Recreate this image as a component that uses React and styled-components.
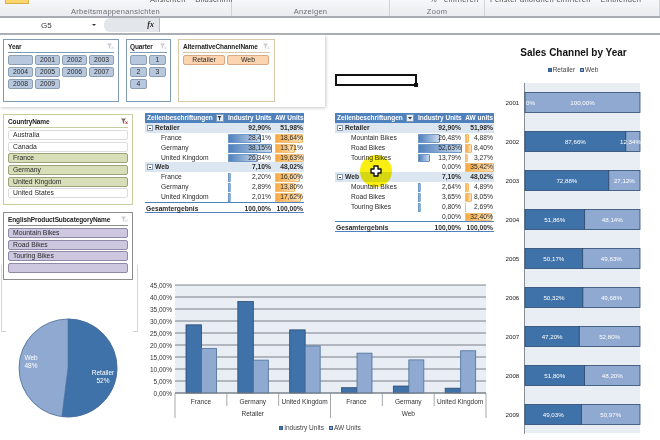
import styled, { createGlobalStyle } from "styled-components";

const Global = createGlobalStyle`
  html, body {
    margin: 0;
    padding: 0;
    background: #ffffff;
  }
  body {
    font-family: "Liberation Sans", Arial, sans-serif;
    color: #222;
  }
`;

const Page = styled.div`
  width: 660px;
  height: 440px;
  overflow: hidden;
  background: #ffffff;
  filter: blur(0.35px);
`;

const Ribbon = styled.div`
  height: 16px;
  display: flex;
  background: linear-gradient(#f6f7f9, #e9ecf0);
  border-bottom: 2px solid #a9adb3;
  overflow: hidden;
`;
const RibbonGroup = styled.div`
  width: ${(p) => p.$w}px;
  flex: none;
  position: relative;
  border-right: 1px solid #d0d3d8;
  box-sizing: border-box;
  text-align: center;
  font-size: 7.5px;
  letter-spacing: 0.3px;
  color: #6b6f76;
  padding-top: 7px;
`;
const RibbonCut = styled.span`
  position: absolute;
  top: -5px;
  left: ${(p) => p.$x}px;
  color: #555;
  white-space: nowrap;
  font-size: 7.5px;
`;
const YellowBtn = styled.span`
  position: absolute;
  top: 0;
  left: 5px;
  width: 24px;
  height: 4px;
  background: #fbd66f;
  border: 1px solid #d9b04a;
  border-top: 0;
  box-sizing: border-box;
`;

const FormulaBar = styled.div`
  height: 14px;
  display: flex;
  align-items: center;
  background: #ffffff;
  border-bottom: 2px solid #a9adb3;
  padding-bottom: 1px;
`;
const NameBox = styled.div`
  width: 100px;
  flex: none;
  display: flex;
  align-items: center;
  font-size: 8px;
  padding-left: 41px;
  box-sizing: border-box;
  gap: 40px;
  color: #333;
`;
const Arrow = styled.span`
  width: 0;
  height: 0;
  border-left: 2px solid transparent;
  border-right: 2px solid transparent;
  border-top: 2px solid #333;
`;
const FxBox = styled.div`
  width: 56px;
  height: 14px;
  flex: none;
  margin-left: 4px;
  background: #e3e6ea;
  border-right: 1px solid #b8bbc0;
  border-radius: 6px 0 0 6px;
  font: italic bold 8px "Liberation Serif", serif;
  text-align: right;
  padding-right: 5px;
  line-height: 14px;
  box-sizing: border-box;
`;

const Stage = styled.div`
  position: relative;
`;
const Sheet = styled.div`
  display: flex;
  height: 405px;
`;
const MainArea = styled.div`
  width: 500px;
  flex: none;
`;
const TopRow = styled.div`
  display: flex;
  height: 78px;
`;
const SlicerBand = styled.div`
  width: 325px;
  height: 72px;
  flex: none;
  box-sizing: border-box;
  display: flex;
  gap: 7px;
  padding: 4px 3px 5px;
  background: #ffffff;
  box-shadow: 1px 1px 3px #c8c8c8;
`;
const SelectedCell = styled.div`
  width: 82px;
  height: 12px;
  margin: 39px 0 0 10px;
  border: 2px solid #111;
  box-sizing: border-box;
  position: relative;
  &::after {
    content: "";
    position: absolute;
    right: -3px;
    bottom: -3px;
    width: 4px;
    height: 4px;
    background: #111;
  }
`;
const LowerGrid = styled.div`
  display: flex;
`;
const LeftColumn = styled.div`
  width: 145px;
  flex: none;
  padding: 1px 0 0 3px;
  box-sizing: border-box;
  position: relative;
`;
const RightColumn = styled.div`
  flex: 1;
`;
const TablesRow = styled.div`
  display: flex;
  gap: 31px;
  height: 162px;
`;
const Frame = styled.div`
  position: absolute;
  left: 1px;
  top: 152px;
  width: 137px;
  height: 67px;
  border: solid #d6d6d6;
  border-width: 0 1px;
  box-sizing: border-box;
  &::before,
  &::after {
    content: "";
    position: absolute;
    bottom: 0;
    width: 5px;
    height: 1px;
    background: #d0d0d0;
  }
  &::before {
    left: -1px;
  }
  &::after {
    right: -1px;
  }
`;
const PieWrap = styled.div`
  margin: 38px 0 0 15px;
  position: relative;
`;
const ChartShift = styled.div`
  margin-left: -5px;
  width: 360px;
`;

const Slicer = styled.div`
  width: ${(p) => p.$w}px;
  height: ${(p) => p.$h}px;
  flex: none;
  box-sizing: border-box;
  background: #ffffff;
  border: 1px solid ${(p) => p.$line};
  padding: 3px ${(p) => p.$px || 4}px;
  margin-bottom: ${(p) => p.$mb || 0}px;
  position: relative;
  z-index: 1;
`;
const SlicerHead = styled.div`
  display: flex;
  justify-content: space-between;
  align-items: center;
  height: 7px;
  font-size: 6.5px;
  font-weight: bold;
  letter-spacing: -0.1px;
  color: #222;
  border-bottom: 1px solid ${(p) => p.$line};
  padding-bottom: 2px;
  margin-bottom: 2px;
  white-space: nowrap;
`;
const Buttons = styled.div`
  display: flex;
  flex-wrap: wrap;
  gap: ${(p) => p.$gap || 2}px 2px;
`;
const Chip = styled.div`
  width: ${(p) => p.$w}px;
  height: 10px;
  box-sizing: border-box;
  border: 1px solid ${(p) => p.$line};
  border-radius: 2px;
  background: ${(p) => p.$bg};
  font-size: 6.8px;
  line-height: 8px;
  text-align: ${(p) => p.$align || "center"};
  padding-left: ${(p) => p.$pad || 0}px;
  color: #2a2a2a;
  white-space: nowrap;
`;

const PivotBox = styled.div`
  width: 159px;
  flex: none;
  font-size: 6.7px;
`;
const PivotRow = styled.div`
  display: grid;
  grid-template-columns: 80px 47px 32px;
  height: ${(p) => p.$h || 9.85}px;
  line-height: ${(p) => p.$h || 9.85}px;
  background: ${(p) => (p.$head ? "#4f81bd" : p.$group ? "#dce6f1" : "transparent")};
  color: ${(p) => (p.$head ? "#fff" : "#2a2a2a")};
  font-size: ${(p) => (p.$head ? "6.5px" : "inherit")};
  font-weight: ${(p) => (p.$bold ? "bold" : "normal")};
  border-top: ${(p) => (p.$total ? "1px solid #4f81bd" : "0")};
  border-bottom: ${(p) => (p.$total ? "1px solid #4f81bd" : "0")};
  box-sizing: border-box;
  white-space: nowrap;
`;
const LabelCell = styled.div`
  padding-left: ${(p) => p.$pad}px;
  display: flex;
  align-items: center;
  gap: 2px;
  position: relative;
`;
const Toggle = styled.span`
  width: 4px;
  height: 4px;
  border: 1px solid #8a9cb0;
  background: #fff;
  position: relative;
  flex: none;
  &::after {
    content: "";
    position: absolute;
    left: 1px;
    top: 2px;
    width: 2px;
    height: 1px;
    background: #333;
  }
`;
const FilterBtn = styled.span`
  position: absolute;
  right: 1px;
  top: 1px;
  width: 8px;
  height: 8px;
  background: #e6edf6;
  border: 1px solid #7f9db9;
  box-sizing: border-box;
  display: flex;
  align-items: center;
  justify-content: center;
`;
const ValueCell = styled.div`
  position: relative;
  text-align: right;
  padding-right: 1px;
  margin-left: 3px;
`;
const DataBar = styled.span`
  position: absolute;
  left: 0;
  top: 1px;
  bottom: 0;
  border: 1px solid ${(p) => p.$line};
  border-right-color: transparent;
  box-sizing: border-box;
  background: linear-gradient(90deg, ${(p) => p.$from}, ${(p) => p.$to});
`;
const CellText = styled.span`
  position: relative;
`;

const SideChart = styled.div`
  width: 160px;
  flex: none;
  text-align: center;
`;
const ChartTitle = styled.div`
  margin: 11px 13px 0 0;
  font-size: 10px;
  font-weight: bold;
  color: #111;
  line-height: 13px;
`;
const Legend = styled.div`
  display: flex;
  justify-content: center;
  gap: 5px;
  font-size: 6.5px;
  color: #444;
  line-height: 9px;
  margin: ${(p) => p.$margin};
`;
const LegendItem = styled.span`
  display: inline-flex;
  align-items: center;
  gap: 1px;
  &::before {
    content: "";
    width: 4px;
    height: 4px;
    background: ${(p) => p.$color};
    border: 1px solid #3a5f8a;
    box-sizing: border-box;
  }
`;
const YellowSpot = styled.div`
  position: absolute;
  left: 360px;
  top: 120px;
  width: 32px;
  height: 32px;
  border-radius: 50%;
  background: #f8ee12;
  mix-blend-mode: multiply;
  z-index: 3;
`;
const CursorIcon = styled.svg`
  position: absolute;
  left: 370px;
  top: 130px;
  z-index: 4;
`;
const SvgBlock = styled.svg`
  display: block;
`;

const DARK = "#3f72a9";
const LIGHT = "#8fa9d0";
const EDGE = "#2b4a6f";
const PLOT = "#e9edf4";

const years = ["", "2001", "2002", "2003", "2004", "2005", "2006", "2007", "2008", "2009"];
const quarters = ["", "1", "2", "3", "4"];
const countries = [
  ["Australia", false],
  ["Canada", false],
  ["France", true],
  ["Germany", true],
  ["United Kingdom", true],
  ["United States", false],
];
const subcats = ["Mountain Bikes", "Road Bikes", "Touring Bikes", ""];

const table1 = [
  { kind: "group", label: "Retailer", a: "92,90%", b: "51,98%" },
  { label: "France", a: "28,41%", b: "18,64%", x: 28.41, y: 18.64 },
  { label: "Germany", a: "38,15%", b: "13,71%", x: 38.15, y: 13.71 },
  { label: "United Kingdom", a: "26,34%", b: "19,63%", x: 26.34, y: 19.63 },
  { kind: "group", label: "Web", a: "7,10%", b: "48,02%" },
  { label: "France", a: "2,20%", b: "16,60%", x: 2.2, y: 16.6 },
  { label: "Germany", a: "2,89%", b: "13,80%", x: 2.89, y: 13.8 },
  { label: "United Kingdom", a: "2,01%", b: "17,62%", x: 2.01, y: 17.62 },
];
const table2 = [
  { kind: "group", label: "Retailer", a: "92,90%", b: "51,98%" },
  { label: "Mountain Bikes", a: "26,48%", b: "4,88%", x: 26.48, y: 4.88 },
  { label: "Road Bikes", a: "52,63%", b: "8,40%", x: 52.63, y: 8.4 },
  { label: "Touring Bikes", a: "13,79%", b: "3,27%", x: 13.79, y: 3.27 },
  { label: "", a: "0,00%", b: "35,42%", x: 0, y: 35.42 },
  { kind: "group", label: "Web", a: "7,10%", b: "48,02%" },
  { label: "Mountain Bikes", a: "2,64%", b: "4,89%", x: 2.64, y: 4.89 },
  { label: "Road Bikes", a: "3,65%", b: "8,05%", x: 3.65, y: 8.05 },
  { label: "Touring Bikes", a: "0,80%", b: "2,69%", x: 0.8, y: 2.69 },
  { label: "", a: "0,00%", b: "32,40%", x: 0, y: 32.4 },
];

const FunnelIcon = ({ active }) => (
  <svg width="7" height="7" viewBox="0 0 7 7">
    <path d="M0 0.5h5L3.2 3v3L1.8 5V3z" fill={active ? "#8a6a55" : "#c9ced4"} />
    <path d="M4.5 3.5l2 2.5M6.5 3.5l-2 2.5" stroke={active ? "#c0392b" : "#d6d9dd"} strokeWidth="0.9" />
  </svg>
);

function SlicerPanel({ title, w, h, line, mb, px, gap, active, children }) {
  return (
    <Slicer $w={w} $h={h} $line={line} $mb={mb} $px={px}>
      <SlicerHead $line={line}>
        {title}
        <FunnelIcon active={active} />
      </SlicerHead>
      <Buttons $gap={gap}>{children}</Buttons>
    </Slicer>
  );
}

function Pivot({ rows, scaleA, scaleB, lastHead, filtered }) {
  return (
    <PivotBox>
      <PivotRow $head $bold $h={10}>
        <LabelCell $pad={2}>
          Zeilenbeschriftungen
          <FilterBtn>
            <svg width="6" height="6" viewBox="0 0 6 6">
              {filtered ? (
                <path d="M0.5 1h4L3 3v2.5L2 5V3z" fill="#333" />
              ) : (
                <path d="M1 2h4L3 4.5z" fill="#333" />
              )}
            </svg>
          </FilterBtn>
        </LabelCell>
        <ValueCell>Industry Units</ValueCell>
        <ValueCell>{lastHead}</ValueCell>
      </PivotRow>
      {rows.map((r, i) =>
        r.kind === "group" ? (
          <PivotRow key={i} $group $bold>
            <LabelCell $pad={2}>
              <Toggle />
              {r.label}
            </LabelCell>
            <ValueCell>{r.a}</ValueCell>
            <ValueCell>{r.b}</ValueCell>
          </PivotRow>
        ) : (
          <PivotRow key={i}>
            <LabelCell $pad={16}>{r.label}</LabelCell>
            <ValueCell>
              {r.x > 0 && (
                <DataBar
                  $line="#6f97c6"
                  $from="#4f81bd"
                  $to="#c9d9ec"
                  style={{ width: `${(r.x / scaleA) * 100}%`, minWidth: 3 }}
                />
              )}
              <CellText>{r.a}</CellText>
            </ValueCell>
            <ValueCell>
              <DataBar
                $line="#f2c078"
                $from="#f7a941"
                $to="#fce3bb"
                style={{ width: `${(r.y / scaleB) * 100}%` }}
              />
              <CellText>{r.b}</CellText>
            </ValueCell>
          </PivotRow>
        )
      )}
      <PivotRow $total $bold $h={11}>
        <LabelCell $pad={1}>Gesamtergebnis</LabelCell>
        <ValueCell>100,00%</ValueCell>
        <ValueCell>100,00%</ValueCell>
      </PivotRow>
    </PivotBox>
  );
}

const channelYears = [
  ["2001", 0, "0%", "100,00%"],
  ["2002", 87.66, "87,66%", "12,34%"],
  ["2003", 72.88, "72,88%", "27,12%"],
  ["2004", 51.86, "51,86%", "48,14%"],
  ["2005", 50.17, "50,17%", "49,83%"],
  ["2006", 50.32, "50,32%", "49,68%"],
  ["2007", 47.2, "47,20%", "52,80%"],
  ["2008", 51.8, "51,80%", "48,20%"],
  ["2009", 49.03, "49,03%", "50,97%"],
];

function ChannelChart() {
  const left = 25;
  const width = 115;
  return (
    <SvgBlock width="160" height="352" viewBox="0 0 160 352">
      <rect x={left} y="0" width={width} height="350" fill={PLOT} />
      <line x1={left - 0.5} y1="0" x2={left - 0.5} y2="351" stroke="#8a8f96" />
      {channelYears.map(([year, share, t1, t2], i) => {
        const y = 9.5 + i * 39;
        const w1 = (share / 100) * width;
        return (
          <g key={year} fontFamily="Liberation Sans, Arial, sans-serif" fontSize="6.2">
            <text x="5.5" y={y + 12} fill="#222">{year}</text>
            <rect x={left} y={y} width={w1} height="20" fill={DARK} stroke={EDGE} strokeWidth="0.8" />
            <rect x={left + w1} y={y} width={width - w1} height="20" fill={LIGHT} stroke={EDGE} strokeWidth="0.8" />
            <text
              x={share === 0 ? left + 1 : left + w1 / 2}
              y={y + 12.5}
              textAnchor={share === 0 ? "start" : "middle"}
              fill="#fff"
            >
              {t1}
            </text>
            <text
              x={share > 85 ? left + width + 1 : left + w1 + (width - w1) / 2}
              y={y + 12.5}
              textAnchor={share > 85 ? "end" : "middle"}
              fill="#fff"
            >
              {t2}
            </text>
          </g>
        );
      })}
    </SvgBlock>
  );
}

function PieChart() {
  // Retailer runs clockwise from 12 o'clock, 52% of the circle
  const r = 49;
  const cx = 50;
  const cy = 50;
  const a = 0.52 * 2 * Math.PI;
  const ex = cx + r * Math.sin(a);
  const ey = cy - r * Math.cos(a);
  return (
    <SvgBlock width="100" height="100" viewBox="0 0 100 100">
      <circle cx={cx} cy={cy} r={r} fill={LIGHT} stroke="#4a6f9c" strokeWidth="0.8" />
      <path
        d={`M${cx} ${cy}L${cx} ${cy - r}A${r} ${r} 0 1 1 ${ex} ${ey}Z`}
        fill={DARK}
        stroke="#4a6f9c"
        strokeWidth="0.6"
      />
      <g fill="#fff" fontFamily="Liberation Sans, Arial, sans-serif" fontSize="6.5" textAnchor="middle">
        <text x="13" y="42">Web</text>
        <text x="13" y="50">48%</text>
        <text x="85" y="57">Retailer</text>
        <text x="85" y="65">52%</text>
      </g>
    </SvgBlock>
  );
}

const categories = [
  ["France", 28.4, 18.6],
  ["Germany", 38.1, 13.7],
  ["United Kingdom", 26.3, 19.6],
  ["France", 2.2, 16.6],
  ["Germany", 2.9, 13.8],
  ["United Kingdom", 2.0, 17.6],
];

function BarChart() {
  const left = 35;
  const top = 10;
  const w = 311;
  const h = 108;
  const catW = w / 6;
  const bottom = top + h;
  const ticks = [45, 40, 35, 30, 25, 20, 15, 10, 5, 0];
  return (
    <SvgBlock width="360" height="146" viewBox="0 0 360 146">
      <g fontFamily="Liberation Sans, Arial, sans-serif" fontSize="6.5" fill="#333">
        <rect x={left} y={top} width={w} height={h} fill={PLOT} />
        {ticks.map((t, i) => (
          <g key={t}>
            <line x1={left} x2={left + w} y1={top + i * 12} y2={top + i * 12} stroke="#5d6570" strokeWidth="0.8" />
            <text x={left - 3} y={top + i * 12 + 2.5} textAnchor="end">{`${t},00%`}</text>
          </g>
        ))}
        {categories.map(([name, a, b], i) => {
          const x = left + i * catW;
          const ha = (a / 45) * h;
          const hb = (b / 45) * h;
          return (
            <g key={i}>
              <rect x={x + 11} y={bottom - ha} width="15.5" height={ha} fill={DARK} stroke={EDGE} strokeWidth="0.8" />
              <rect x={x + 26.5} y={bottom - hb} width="15" height={hb} fill={LIGHT} stroke="#4a6f9c" strokeWidth="0.8" />
              <line x1={x} x2={x} y1={bottom} y2={i % 3 === 0 ? bottom + 25 : bottom + 13} stroke="#a4a8ad" />
              <text x={x + catW / 2} y={bottom + 11} textAnchor="middle">{name}</text>
            </g>
          );
        })}
        <line x1={left + w} x2={left + w} y1={bottom} y2={bottom + 25} stroke="#a4a8ad" />
        <line x1={left} x2={left + w} y1={bottom} y2={bottom} stroke="#7d838a" />
        <text x={left + catW * 1.5} y={bottom + 23} textAnchor="middle">Retailer</text>
        <text x={left + catW * 4.5} y={bottom + 23} textAnchor="middle">Web</text>
      </g>
    </SvgBlock>
  );
}

export default function App() {
  return (
    <>
      <Global />
      <Page>
        <Ribbon>
          <RibbonGroup $w={232}>
            <YellowBtn />
            <RibbonCut $x={150}>Ansichten&nbsp;&nbsp;&nbsp;&nbsp;Bildschirm</RibbonCut>
            Arbeitsmappenansichten
          </RibbonGroup>
          <RibbonGroup $w={158}>Anzeigen</RibbonGroup>
          <RibbonGroup $w={95}>
            <RibbonCut $x={40}>%&nbsp;&nbsp;&nbsp;einfrieren</RibbonCut>
            Zoom
          </RibbonGroup>
          <RibbonGroup $w={175}>
            <RibbonCut $x={5}>Fenster anordnen einfrieren ·&nbsp;&nbsp;Einblenden</RibbonCut>
          </RibbonGroup>
        </Ribbon>
        <FormulaBar>
          <NameBox>
            G5
            <Arrow />
          </NameBox>
          <FxBox>fx</FxBox>
        </FormulaBar>
        <Stage>
          <Sheet>
            <MainArea>
              <TopRow>
                <SlicerBand>
                  <SlicerPanel title="Year" w={116} h={63} line="#7f9bb5">
                    {years.map((y) => (
                      <Chip key={y} $w={25} $bg="#b7c8de" $line="#8d9fb5">{y}</Chip>
                    ))}
                  </SlicerPanel>
                  <SlicerPanel title="Quarter" w={45} h={63} px={3} line="#7f9bb5">
                    {quarters.map((q) => (
                      <Chip key={q} $w={17} $bg="#b7c8de" $line="#8d9fb5">{q}</Chip>
                    ))}
                  </SlicerPanel>
                  <SlicerPanel title="AlternativeChannelName" w={97} h={63} line="#d9c9a8">
                    <Chip $w={42} $bg="#fbd5b0" $line="#d8a983">Retailer</Chip>
                    <Chip $w={42} $bg="#fbd5b0" $line="#d8a983">Web</Chip>
                  </SlicerPanel>
                </SlicerBand>
                <SelectedCell />
              </TopRow>
              <LowerGrid>
                <LeftColumn>
                  <Frame />
                  <SlicerPanel title="CountryName" w={130} h={91} gap={1.7} line="#c8cda0" mb={7} active>
                    {countries.map(([name, on]) => (
                      <Chip
                        key={name}
                        $w={120}
                        $align="left"
                        $pad={4}
                        $bg={on ? "#d8dfb8" : "#ffffff"}
                        $line={on ? "#9aa37a" : "#dcdcdc"}
                      >
                        {name}
                      </Chip>
                    ))}
                  </SlicerPanel>
                  <SlicerPanel title="EnglishProductSubcategoryName" w={130} h={68} gap={1.7} line="#8d8d8d">
                    {subcats.map((name) => (
                      <Chip key={name} $w={120} $align="left" $pad={4} $bg="#cdc8e0" $line="#8f8aa8">
                        {name}
                      </Chip>
                    ))}
                  </SlicerPanel>
                  <PieWrap>
                    <PieChart />
                  </PieWrap>
                </LeftColumn>
                <RightColumn>
                  <TablesRow>
                    <Pivot rows={table1} scaleA={38.15} scaleB={19.63} lastHead="AW Units" filtered />
                    <Pivot rows={table2} scaleA={52.63} scaleB={35.42} lastHead="AW units" />
                  </TablesRow>
                  <ChartShift>
                    <BarChart />
                    <Legend $margin="2px 0 0 0">
                      <LegendItem $color={DARK}>Industry Units</LegendItem>
                      <LegendItem $color={LIGHT}>AW Units</LegendItem>
                    </Legend>
                  </ChartShift>
                </RightColumn>
              </LowerGrid>
            </MainArea>
            <SideChart>
              <ChartTitle>Sales Channel by Year</ChartTitle>
              <Legend $margin="6px 14px 9px 0">
                <LegendItem $color={DARK}>Retailer</LegendItem>
                <LegendItem $color={LIGHT}>Web</LegendItem>
              </Legend>
              <ChannelChart />
            </SideChart>
          </Sheet>
          <YellowSpot />
          <CursorIcon width="12" height="12" viewBox="0 0 12 12">
            <path
              d="M4 1h4v3h3v4H8v3H4V8H1V4h3z"
              fill="#fff"
              stroke="#111"
              strokeWidth="1.4"
              strokeLinejoin="round"
            />
          </CursorIcon>
        </Stage>
      </Page>
    </>
  );
}
